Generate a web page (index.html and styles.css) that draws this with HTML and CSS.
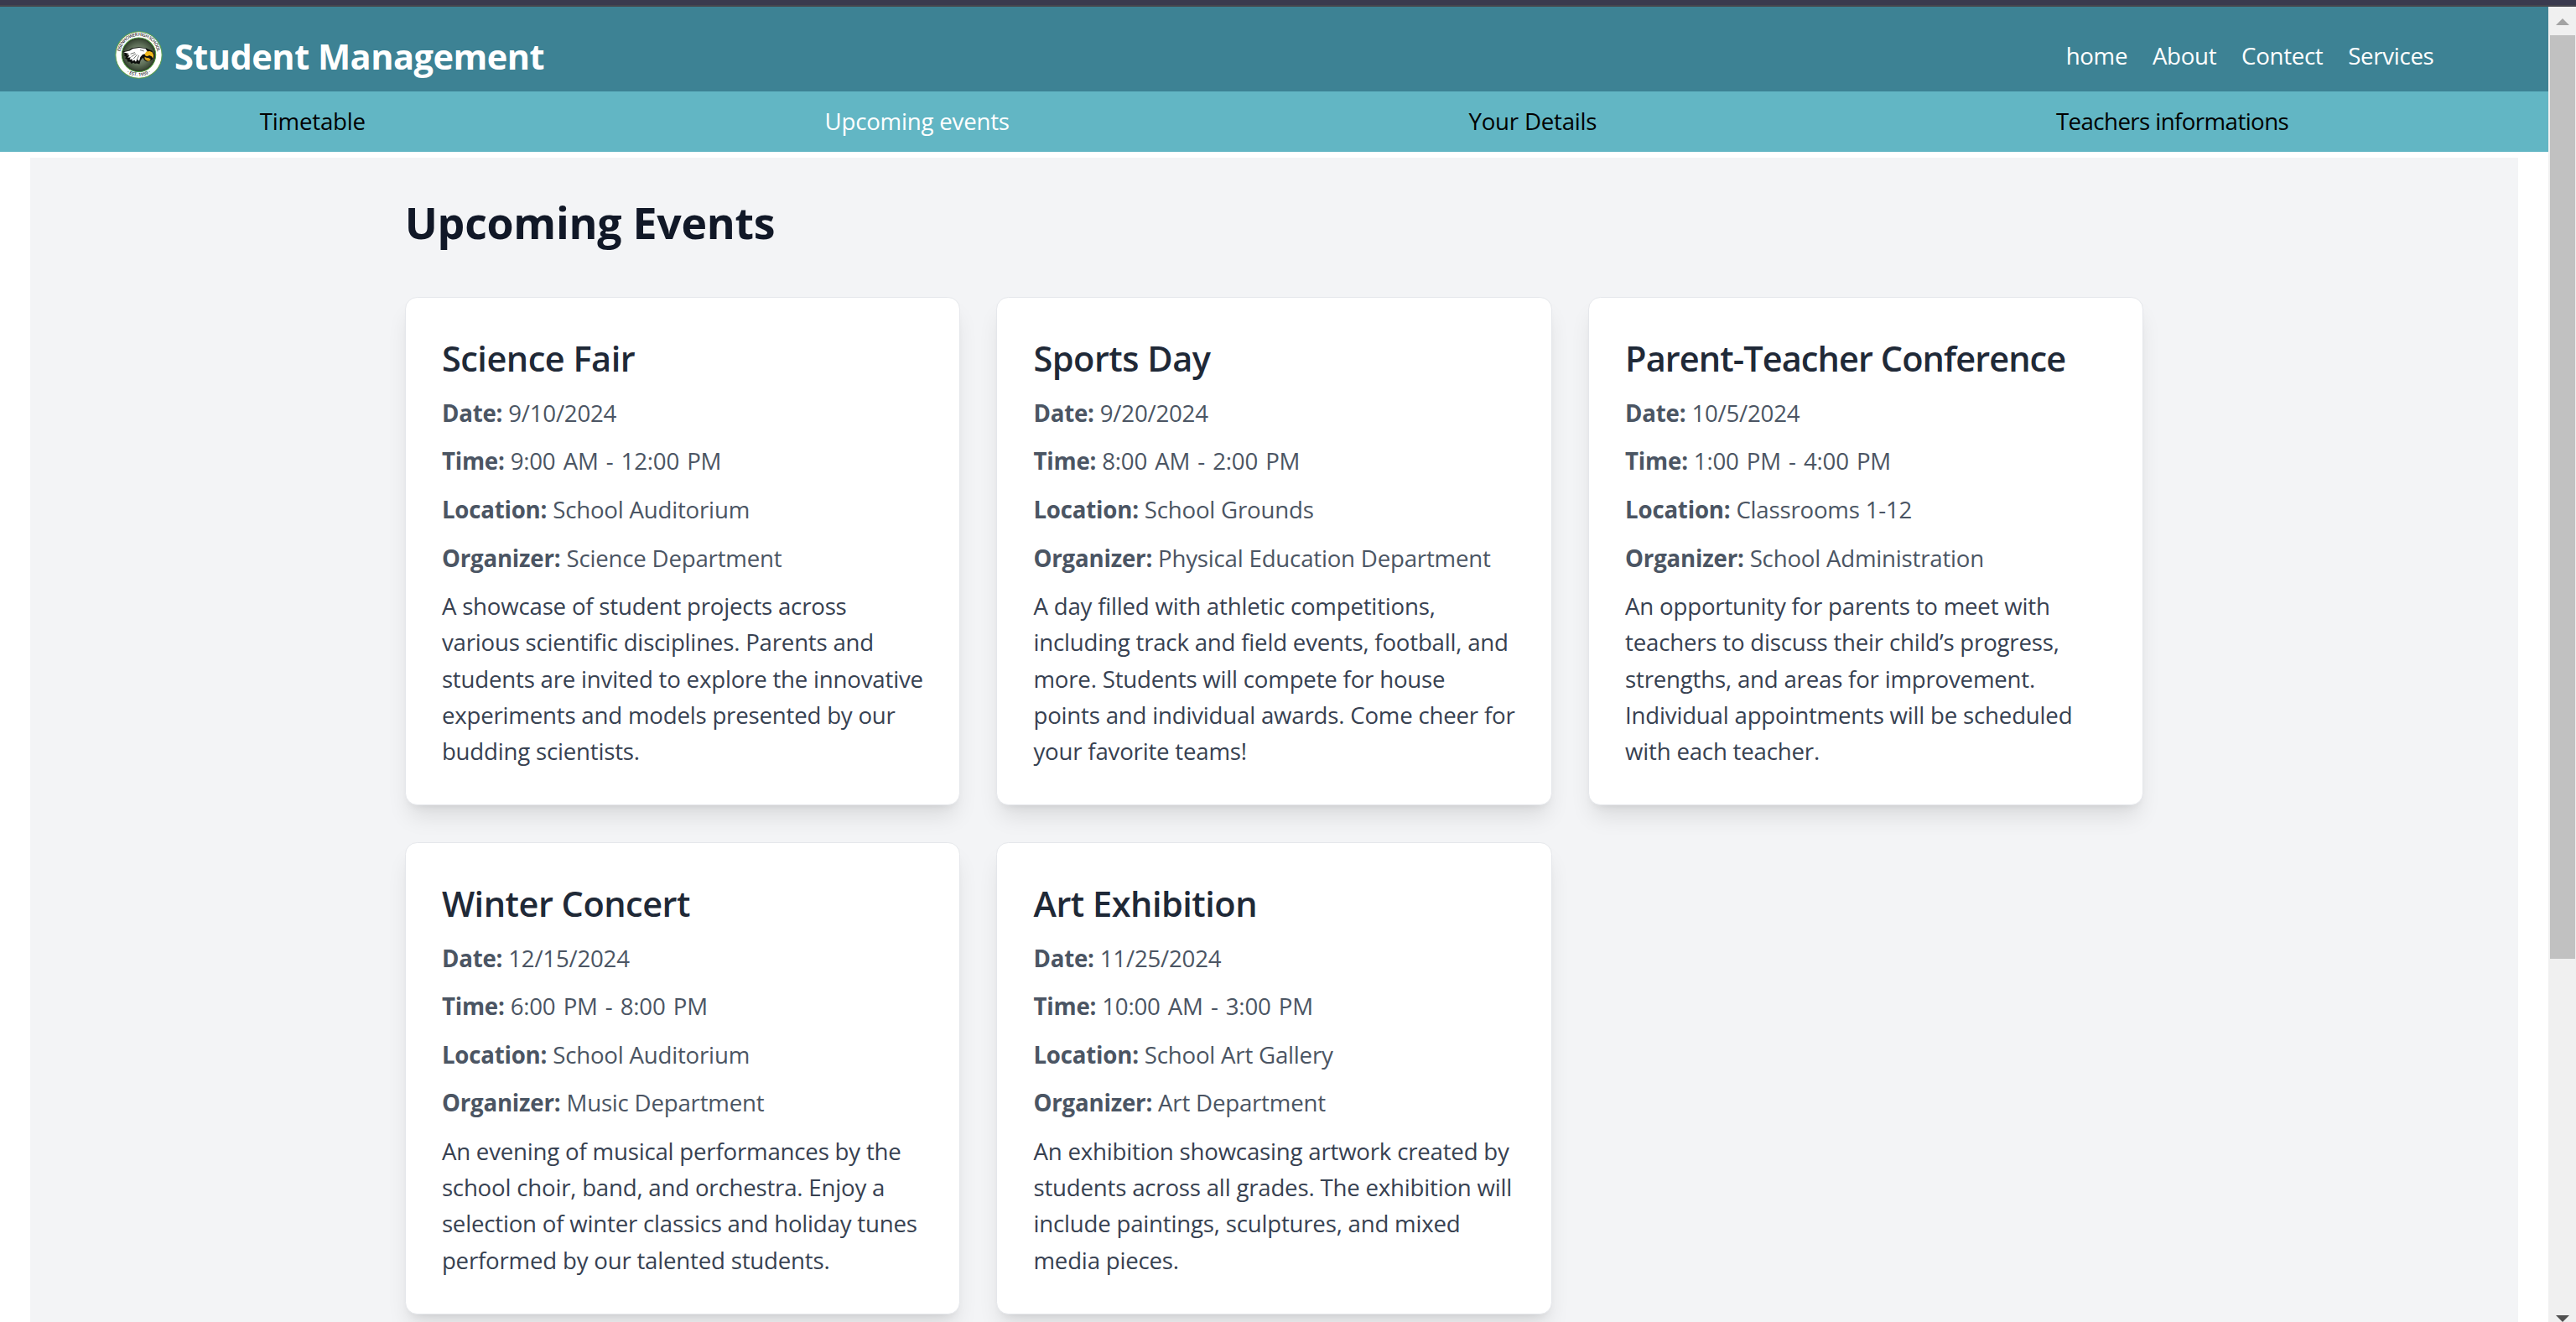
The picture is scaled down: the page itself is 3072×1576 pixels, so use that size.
FILE: index.html
```html
<!DOCTYPE html>
<html lang="en">
<head>
<meta charset="utf-8">
<title>Student Management</title>
<link rel="stylesheet" href="styles.css">
</head>
<body>
<div class="window-edge"></div>
<div class="viewport">
  <div class="page">
    <header class="header">
      <div class="brand">
        <svg class="logo" viewBox="53 52 169 169" role="img" aria-label="Eisenhower High School">
          <defs>
            <radialGradient id="disc" cx="50%" cy="50%" r="50%">
              <stop offset="0" stop-color="#8f9b89"/>
              <stop offset="0.6" stop-color="#5f7059"/>
              <stop offset="0.9" stop-color="#3c4a38"/>
              <stop offset="1" stop-color="#20261f"/>
            </radialGradient>
            <path id="arc-top" d="M71 136a66.500 66.500 0 0 1 133 0"/>
            <path id="arc-bottom" d="M62 136a75.500 75.500 0 0 0 151 0"/>
          </defs>
          <circle cx="137.500" cy="136.500" r="82" fill="#fff" stroke="#5ea04c" stroke-width="3"/>
          <circle cx="137.500" cy="136" r="60" fill="url(#disc)" stroke="#4f9a3c" stroke-width="3"/>
          <text class="seal-text"><textPath href="#arc-top" startOffset="50%" text-anchor="middle" textLength="186">EISENHOWER HIGH SCHOOL</textPath></text>
          <text class="seal-text"><textPath href="#arc-bottom" startOffset="50%" text-anchor="middle">· EST. 1959 ·</textPath></text>
          <path d="M80 125l20-4 14-9 24-3 26 4 20 9 8 14-4 14-8 6-14 4-8-4-6-10-8 10-4 13-10-3-6 2-5-4-8 4-4-7-9-1-2-8-7-3 3-6-6-4 2-7z" fill="#0d0f0d"/>
          <path d="M83 127l22-5 12-8 22-3 22 3 7 10-5 8-12 3-8 9-4 14-7-6-5 9-5-7-7 5-1-8-9 2 4-8-11 1 7-7-10-3 9-3z" fill="#fff"/>
          <path d="M108 133l16-5M111 143l16-11M119 150l13-15M130 155l8-17M142 119l14 4" fill="none" stroke="#272b27" stroke-width="2"/>
          <path d="M164 125l12-2 9 4 5 10-3 12-4-7-8-4-7 3-6-1-4-6z" fill="#f2b91d"/>
          <path d="M158 143l8 3 7 1 7 4-5 7-9-1-7-6z" fill="#d7a11a"/>
          <path d="M160 145l10-2 8 1 4 6-10-3z" fill="#171717"/>
        </svg>
        <span class="brand-name">Student Management</span>
      </div>
      <nav class="links">
        <a>home</a>
        <a>About</a>
        <a>Contect</a>
        <a>Services</a>
      </nav>
    </header>
    <nav class="tabs">
      <a>Timetable</a>
      <a class="active">Upcoming events</a>
      <a>Your Details</a>
      <a class="long">Teachers informations</a>
    </nav>
    <main class="content">
      <div class="container">
        <h1>Upcoming Events</h1>
        <div class="grid">
          <article class="card">
            <h2>Science Fair</h2>
            <p class="meta"><strong>Date:</strong> 9/10/2024</p>
            <p class="meta"><strong>Time:</strong> <span class="time">9:00 AM - 12:00 PM</span></p>
            <p class="meta"><strong>Location:</strong> School Auditorium</p>
            <p class="meta"><strong>Organizer:</strong> Science Department</p>
            <p class="about">A showcase of student projects across<br>various scientific disciplines. Parents and<br>students are invited to explore the innovative<br>experiments and models presented by our<br>budding scientists.</p>
          </article>
          <article class="card">
            <h2>Sports Day</h2>
            <p class="meta"><strong>Date:</strong> 9/20/2024</p>
            <p class="meta"><strong>Time:</strong> <span class="time">8:00 AM - 2:00 PM</span></p>
            <p class="meta"><strong>Location:</strong> School Grounds</p>
            <p class="meta"><strong>Organizer:</strong> Physical Education Department</p>
            <p class="about">A day filled with athletic competitions,<br>including track and field events, football, and<br>more. Students will compete for house<br>points and individual awards. Come cheer for<br>your favorite teams!</p>
          </article>
          <article class="card">
            <h2 class="long">Parent-Teacher Conference</h2>
            <p class="meta"><strong>Date:</strong> 10/5/2024</p>
            <p class="meta"><strong>Time:</strong> <span class="time">1:00 PM - 4:00 PM</span></p>
            <p class="meta"><strong>Location:</strong> Classrooms 1-12</p>
            <p class="meta"><strong>Organizer:</strong> School Administration</p>
            <p class="about">An opportunity for parents to meet with<br>teachers to discuss their child’s progress,<br>strengths, and areas for improvement.<br>Individual appointments will be scheduled<br>with each teacher.</p>
          </article>
          <article class="card">
            <h2>Winter Concert</h2>
            <p class="meta"><strong>Date:</strong> 12/15/2024</p>
            <p class="meta"><strong>Time:</strong> <span class="time">6:00 PM - 8:00 PM</span></p>
            <p class="meta"><strong>Location:</strong> School Auditorium</p>
            <p class="meta"><strong>Organizer:</strong> Music Department</p>
            <p class="about">An evening of musical performances by the<br>school choir, band, and orchestra. Enjoy a<br>selection of winter classics and holiday tunes<br>performed by our talented students.</p>
          </article>
          <article class="card">
            <h2>Art Exhibition</h2>
            <p class="meta"><strong>Date:</strong> 11/25/2024</p>
            <p class="meta"><strong>Time:</strong> <span class="time">10:00 AM - 3:00 PM</span></p>
            <p class="meta"><strong>Location:</strong> School Art Gallery</p>
            <p class="meta"><strong>Organizer:</strong> Art Department</p>
            <p class="about">An exhibition showcasing artwork created by<br>students across all grades. The exhibition will<br>include paintings, sculptures, and mixed<br>media pieces.</p>
          </article>
        </div>
      </div>
    </main>
  </div>
  <div class="scrollbar">
    <svg class="arrow" viewBox="0 0 16 8"><path d="M0 8L8 0l8 8z" fill="#a3a3a3"/></svg>
    <div class="thumb"></div>
    <svg class="arrow arrow-down" viewBox="0 0 16 8"><path d="M0 0h16L8 8z" fill="#505050"/></svg>
  </div>
</div>
</body>
</html>
```

FILE: styles.css
```css
* {
  box-sizing: border-box;
  margin: 0;
  padding: 0;
}

body {
  height: 1576px;
  overflow: hidden;
  display: flex;
  flex-direction: column;
  background: #fff;
  color: #000;
  font-family: "Open Sans", "Noto Sans", sans-serif;
  font-size: 27.65px;
  line-height: 43.2px;
  letter-spacing: -0.21px;
}

.window-edge {
  flex: none;
  height: 8px;
  background: #3a3a4e;
  border-bottom: 2px solid #46464d;
}

.viewport {
  flex: 1;
  min-height: 0;
  display: flex;
}

.page {
  flex: 1;
  overflow: hidden;
}

.header {
  height: 101px;
  padding: 14px 136.5px 0;
  display: flex;
  align-items: center;
  justify-content: space-between;
  background: #3d8294;
  color: #fff;
}

.brand {
  display: flex;
  align-items: center;
  gap: 14.4px;
}

.logo {
  width: 57px;
  height: 57px;
}

.seal-text {
  font-family: "Open Sans", sans-serif;
  font-size: 16px;
  font-weight: 600;
  letter-spacing: 0;
  fill: #333;
}

.brand-name {
  padding-top: 4px;
  font-size: 41.5px;
  font-weight: 700;
  line-height: 57.6px;
  letter-spacing: -0.49px;
}

.links {
  display: flex;
  gap: 29.8px;
  padding-top: 2px;
  letter-spacing: -0.3px;
}

.tabs {
  height: 72px;
  padding: 14.4px 36px;
  display: flex;
  justify-content: space-around;
  background: #62b6c4;
}

.tabs .active {
  color: #fff;
}

.tabs .long {
  letter-spacing: -0.57px;
}

.content {
  margin: 7px 36px 0;
  padding: 43.2px 0;
  background: #f3f4f6;
}

.container {
  width: 2073.6px;
  margin: 0 auto;
}

h1 {
  padding-top: 2px;
  margin-bottom: 55.6px;
  font-size: 51.84px;
  font-weight: 700;
  line-height: 64.8px;
  letter-spacing: -0.27px;
  color: #111827;
}

.grid {
  display: grid;
  grid-template-columns: repeat(3, 1fr);
  align-items: start;
  gap: 43.2px;
}

.card {
  padding: 44.2px 43.2px 42.2px;
  border: 1px solid #e5e7eb;
  border-radius: 14.4px;
  background: #fff;
  box-shadow: 0 18px 27px -5.4px rgba(0, 0, 0, 0.1), 0 7.2px 10.8px -7.2px rgba(0, 0, 0, 0.1);
  white-space: nowrap;
}

h2 {
  margin-bottom: 14.4px;
  font-size: 41.5px;
  font-weight: 570;
  line-height: 57.6px;
  letter-spacing: -0.5px;
  color: #1f2937;
}

h2.long {
  letter-spacing: -0.92px;
}

.meta {
  margin-bottom: 14.4px;
  color: #4b5563;
}

.time {
  word-spacing: 2.2px;
}

.about {
  color: #374151;
}

.scrollbar {
  flex: none;
  width: 33px;
  padding: 14px 1px 0 2px;
  display: flex;
  flex-direction: column;
  align-items: center;
  background: #f0f0f0;
}

.arrow {
  width: 16px;
  height: 8px;
}

.thumb {
  align-self: stretch;
  height: 1101px;
  margin-top: 12px;
  background: #c1c1c1;
}

.arrow-down {
  margin-top: auto;
}
```
